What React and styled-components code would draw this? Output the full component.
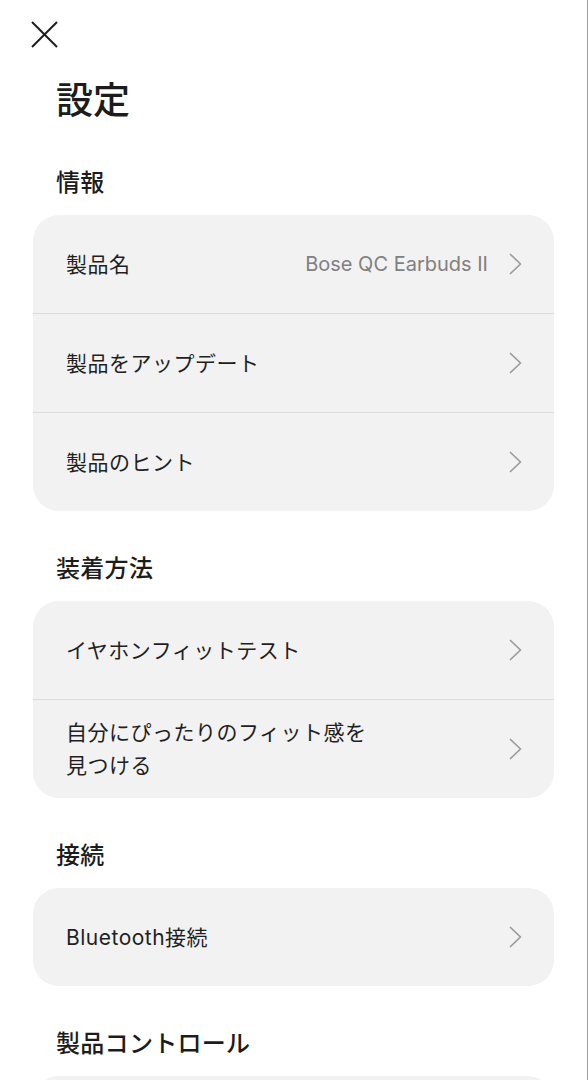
import React from 'react';
import styled, { createGlobalStyle } from 'styled-components';

const GlobalStyle = createGlobalStyle`
  html, body {
    margin: 0;
    padding: 0;
    background: #fff;
  }
  body {
    font-family: "Inter", "Noto Sans CJK JP", sans-serif;
    color: #1c1c1c;
  }
`;

const sections = [
  {
    title: '情報',
    rows: [
      { label: '製品名', value: 'Bose QC Earbuds II' },
      { label: '製品をアップデート' },
      { label: '製品のヒント' },
    ],
  },
  {
    title: '装着方法',
    rows: [
      { label: 'イヤホンフィットテスト' },
      { label: '自分にぴったりのフィット感を見つける' },
    ],
  },
  {
    title: '接続',
    rows: [{ label: 'Bluetooth接続' }],
  },
  {
    title: '製品コントロール',
    rows: [{ label: '' }],
  },
];

const Chevron = () => (
  <svg width="13" height="22" viewBox="0 0 13 22" fill="none">
    <polyline points="1.5,1.5 11.5,11 1.5,20.5" stroke="#9a9a9a" strokeWidth="1.7" strokeLinecap="round" strokeLinejoin="round" />
  </svg>
);

const CloseIcon = () => (
  <svg width="27" height="27" viewBox="0 0 27 27" fill="none">
    <line x1="1" y1="1" x2="26" y2="26" stroke="#1c1c1c" strokeWidth="2" />
    <line x1="26" y1="1" x2="1" y2="26" stroke="#1c1c1c" strokeWidth="2" />
  </svg>
);

const App = () => (
  <Page>
    <GlobalStyle />
    <CloseButton aria-label="閉じる">
      <CloseIcon />
    </CloseButton>
    <Title>設定</Title>
    {sections.map((section) => (
      <Section key={section.title}>
        <SectionTitle>{section.title}</SectionTitle>
        <Card>
          {section.rows.map((row, i) => (
            <Row key={i}>
              <Label>{row.label}</Label>
              <Trailing>
                {row.value && <Value>{row.value}</Value>}
                <Chevron />
              </Trailing>
            </Row>
          ))}
        </Card>
      </Section>
    ))}
  </Page>
);

const Page = styled.main`
  box-sizing: border-box;
  width: 588px;
  min-height: 1080px;
  padding: 21px 33px 40px;
  border-right: 1px solid #9c9c9c;
`;

const CloseButton = styled.button`
  display: block;
  margin: 0 0 0 -2px;
  padding: 0;
  border: none;
  background: none;
  width: 27px;
  height: 27px;
  cursor: pointer;
`;

const Title = styled.h1`
  margin: 30px 0 0 23px;
  font-size: 37px;
  line-height: 46px;
  font-weight: 500;
  letter-spacing: 0;
`;

const Section = styled.section`
  margin-top: 43px;
  &:first-of-type {
    margin-top: 44px;
  }
`;

const SectionTitle = styled.h2`
  margin: 0 0 17px 23px;
  font-size: 24px;
  line-height: 30px;
  font-weight: 500;
  letter-spacing: 0.3px;
`;

const Card = styled.div`
  background: #f2f2f2;
  border-radius: 26px;
  overflow: hidden;
`;

const Row = styled.div`
  display: flex;
  align-items: center;
  justify-content: space-between;
  min-height: 98px;
  padding: 0 32px 0 33px;
  & + & {
    border-top: 1px solid #dcdcdc;
  }
`;

const Label = styled.span`
  max-width: 315px;
  font-size: 21px;
  line-height: 33px;
  letter-spacing: 0.5px;
  color: #1f1f1f;
`;

const Trailing = styled.div`
  display: flex;
  align-items: center;
  gap: 21px;
`;

const Value = styled.span`
  font-size: 20px;
  color: #808080;
`;

export default App;
